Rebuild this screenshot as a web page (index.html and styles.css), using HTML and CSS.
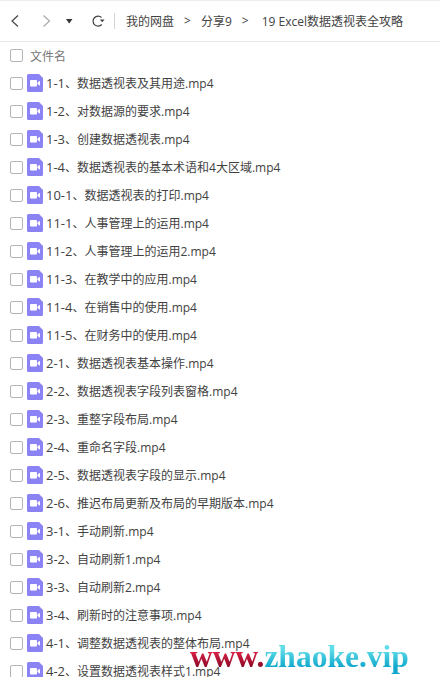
FILE: index.html
```html
<!DOCTYPE html>
<html lang="zh">
<head>
<meta charset="utf-8">
<title>19 Excel数据透视表全攻略</title>
<link rel="stylesheet" href="styles.css">
</head>
<body>
<div class="page">
  <header class="toolbar">
    <svg class="ic back" width="9" height="12" viewBox="0 0 9 12"><path d="M7 .5 L1 6 L7 11.5" fill="none" stroke="#444" stroke-width="1.2"/></svg>
    <svg class="ic fwd" width="9" height="12" viewBox="0 0 9 12"><path d="M1.5 .5 L7.5 6 L1.5 11.5" fill="none" stroke="#aaa" stroke-width="1.2"/></svg>
    <svg class="ic drop" width="7" height="5" viewBox="0 0 7 5"><path d="M0 0 H6.5 L3.2 4.5 Z" fill="#333"/></svg>
    <svg class="ic refresh" width="14" height="13" viewBox="0 0 14 13"><path d="M10.5 2.5 A5 5 0 1 0 10.8 9.5" fill="none" stroke="#444" stroke-width="1.2"/><path d="M8.8 4.4 H13.6 L11.2 7.2 Z" fill="#444"/></svg>
    <span class="divider"></span>
    <nav class="crumbs">
      <span>我的网盘</span><span class="sep">&gt;</span><span>分享9</span><span class="sep">&gt;</span><span class="crumb-last">19 Excel数据透视表全攻略</span>
    </nav>
  </header>
  <div class="head-row"><span class="check"></span><span class="head-label">文件名</span></div>
  <ul class="files">
    <li class="file"><span class="check"></span><svg class="vid" width="16" height="18" viewBox="0 0 16 18"><use href="#v"/></svg><span class="name"><span class="idx">1-1</span>、数据透视表及其用途.mp4</span></li>
    <li class="file"><span class="check"></span><svg class="vid" width="16" height="18" viewBox="0 0 16 18"><use href="#v"/></svg><span class="name"><span class="idx">1-2</span>、对数据源的要求.mp4</span></li>
    <li class="file"><span class="check"></span><svg class="vid" width="16" height="18" viewBox="0 0 16 18"><use href="#v"/></svg><span class="name"><span class="idx">1-3</span>、创建数据透视表.mp4</span></li>
    <li class="file"><span class="check"></span><svg class="vid" width="16" height="18" viewBox="0 0 16 18"><use href="#v"/></svg><span class="name"><span class="idx">1-4</span>、数据透视表的基本术语和4大区域.mp4</span></li>
    <li class="file"><span class="check"></span><svg class="vid" width="16" height="18" viewBox="0 0 16 18"><use href="#v"/></svg><span class="name"><span class="idx">10-1</span>、数据透视表的打印.mp4</span></li>
    <li class="file"><span class="check"></span><svg class="vid" width="16" height="18" viewBox="0 0 16 18"><use href="#v"/></svg><span class="name"><span class="idx">11-1</span>、人事管理上的运用.mp4</span></li>
    <li class="file"><span class="check"></span><svg class="vid" width="16" height="18" viewBox="0 0 16 18"><use href="#v"/></svg><span class="name"><span class="idx">11-2</span>、人事管理上的运用2.mp4</span></li>
    <li class="file"><span class="check"></span><svg class="vid" width="16" height="18" viewBox="0 0 16 18"><use href="#v"/></svg><span class="name"><span class="idx">11-3</span>、在教学中的应用.mp4</span></li>
    <li class="file"><span class="check"></span><svg class="vid" width="16" height="18" viewBox="0 0 16 18"><use href="#v"/></svg><span class="name"><span class="idx">11-4</span>、在销售中的使用.mp4</span></li>
    <li class="file"><span class="check"></span><svg class="vid" width="16" height="18" viewBox="0 0 16 18"><use href="#v"/></svg><span class="name"><span class="idx">11-5</span>、在财务中的使用.mp4</span></li>
    <li class="file"><span class="check"></span><svg class="vid" width="16" height="18" viewBox="0 0 16 18"><use href="#v"/></svg><span class="name"><span class="idx">2-1</span>、数据透视表基本操作.mp4</span></li>
    <li class="file"><span class="check"></span><svg class="vid" width="16" height="18" viewBox="0 0 16 18"><use href="#v"/></svg><span class="name"><span class="idx">2-2</span>、数据透视表字段列表窗格.mp4</span></li>
    <li class="file"><span class="check"></span><svg class="vid" width="16" height="18" viewBox="0 0 16 18"><use href="#v"/></svg><span class="name"><span class="idx">2-3</span>、重整字段布局.mp4</span></li>
    <li class="file"><span class="check"></span><svg class="vid" width="16" height="18" viewBox="0 0 16 18"><use href="#v"/></svg><span class="name"><span class="idx">2-4</span>、重命名字段.mp4</span></li>
    <li class="file"><span class="check"></span><svg class="vid" width="16" height="18" viewBox="0 0 16 18"><use href="#v"/></svg><span class="name"><span class="idx">2-5</span>、数据透视表字段的显示.mp4</span></li>
    <li class="file"><span class="check"></span><svg class="vid" width="16" height="18" viewBox="0 0 16 18"><use href="#v"/></svg><span class="name"><span class="idx">2-6</span>、推迟布局更新及布局的早期版本.mp4</span></li>
    <li class="file"><span class="check"></span><svg class="vid" width="16" height="18" viewBox="0 0 16 18"><use href="#v"/></svg><span class="name"><span class="idx">3-1</span>、手动刷新.mp4</span></li>
    <li class="file"><span class="check"></span><svg class="vid" width="16" height="18" viewBox="0 0 16 18"><use href="#v"/></svg><span class="name"><span class="idx">3-2</span>、自动刷新1.mp4</span></li>
    <li class="file"><span class="check"></span><svg class="vid" width="16" height="18" viewBox="0 0 16 18"><use href="#v"/></svg><span class="name"><span class="idx">3-3</span>、自动刷新2.mp4</span></li>
    <li class="file"><span class="check"></span><svg class="vid" width="16" height="18" viewBox="0 0 16 18"><use href="#v"/></svg><span class="name"><span class="idx">3-4</span>、刷新时的注意事项.mp4</span></li>
    <li class="file"><span class="check"></span><svg class="vid" width="16" height="18" viewBox="0 0 16 18"><use href="#v"/></svg><span class="name"><span class="idx">4-1</span>、调整数据透视表的整体布局.mp4</span></li>
    <li class="file"><span class="check"></span><svg class="vid" width="16" height="18" viewBox="0 0 16 18"><use href="#v"/></svg><span class="name"><span class="idx">4-2</span>、设置数据透视表样式1.mp4</span></li>
  </ul>
  <div class="watermark"><span class="wm-red">www.</span><span class="wm-blue">zhaoke.vip</span></div>
  <svg class="defs" width="0" height="0"><defs><g id="v"><path d="M1.5 0 H12 L16 4 V16.5 A1.5 1.5 0 0 1 14.5 18 H1.5 A1.5 1.5 0 0 1 0 16.5 V1.5 A1.5 1.5 0 0 1 1.5 0 Z" fill="#8B83F5"/><rect x="3" y="6" width="7" height="6.5" rx="1" fill="#fff"/><path d="M10.5 8.5 L13 6.8 V11.8 L10.5 10 Z" fill="#fff"/></g></defs></svg>
</div>
</body>
</html>
```
FILE: styles.css
```css
* { box-sizing: border-box; }
html, body { margin: 0; padding: 0; background: #fff; }
.page {
  position: relative;
  width: 440px;
  height: 677px;
  overflow: hidden;
  font-family: "Open Sans", "Noto Sans CJK SC", sans-serif;
  font-size: 12px;
  color: #424242;
  border-top: 1px solid #ececec;
}
.toolbar {
  display: flex;
  align-items: center;
  height: 41px;
  border-bottom: 1px solid #e8e8e8;
  padding-left: 11px;
}
.ic { flex: none; display: block; }
.fwd { margin-left: 22px; }
.drop { margin-left: 15px; }
.refresh { margin-left: 18px; }
.divider { width: 1px; height: 16px; background: #d4d4d4; margin-left: 9px; }
.crumbs { display: flex; margin-left: 11px; white-space: nowrap; }
.sep { margin: 0 10px; }
.crumb-last { margin-left: 3px; }
.head-row {
  display: flex;
  align-items: center;
  height: 27px;
  padding-left: 10px;
}
.head-label { margin-left: 7px; color: #777; }
.check {
  flex: none;
  width: 13px;
  height: 13px;
  border: 1px solid #b4b4b4;
  border-radius: 2px;
  background: #fff;
}
.files { list-style: none; margin: 0; padding: 0; }
.file {
  display: flex;
  align-items: center;
  height: 28px;
  padding-left: 10px;
}
.vid { flex: none; margin-left: 4px; }
.name { margin-left: 3px; white-space: nowrap; }
.idx { font-size: 13px; }
.defs { position: absolute; }
.watermark {
  position: absolute;
  left: 190px;
  top: 639px;
  font-family: "Liberation Serif", serif;
  font-weight: 700;
  font-size: 31.5px;
  line-height: 34px;
  white-space: nowrap;
}
.wm-red { background: linear-gradient(#e8234a 30%, #8a0a26 80%); -webkit-background-clip: text; background-clip: text; color: transparent; }
.wm-blue { background: linear-gradient(#5fdde8 30%, #10a8cc 80%); -webkit-background-clip: text; background-clip: text; color: transparent; }
```
